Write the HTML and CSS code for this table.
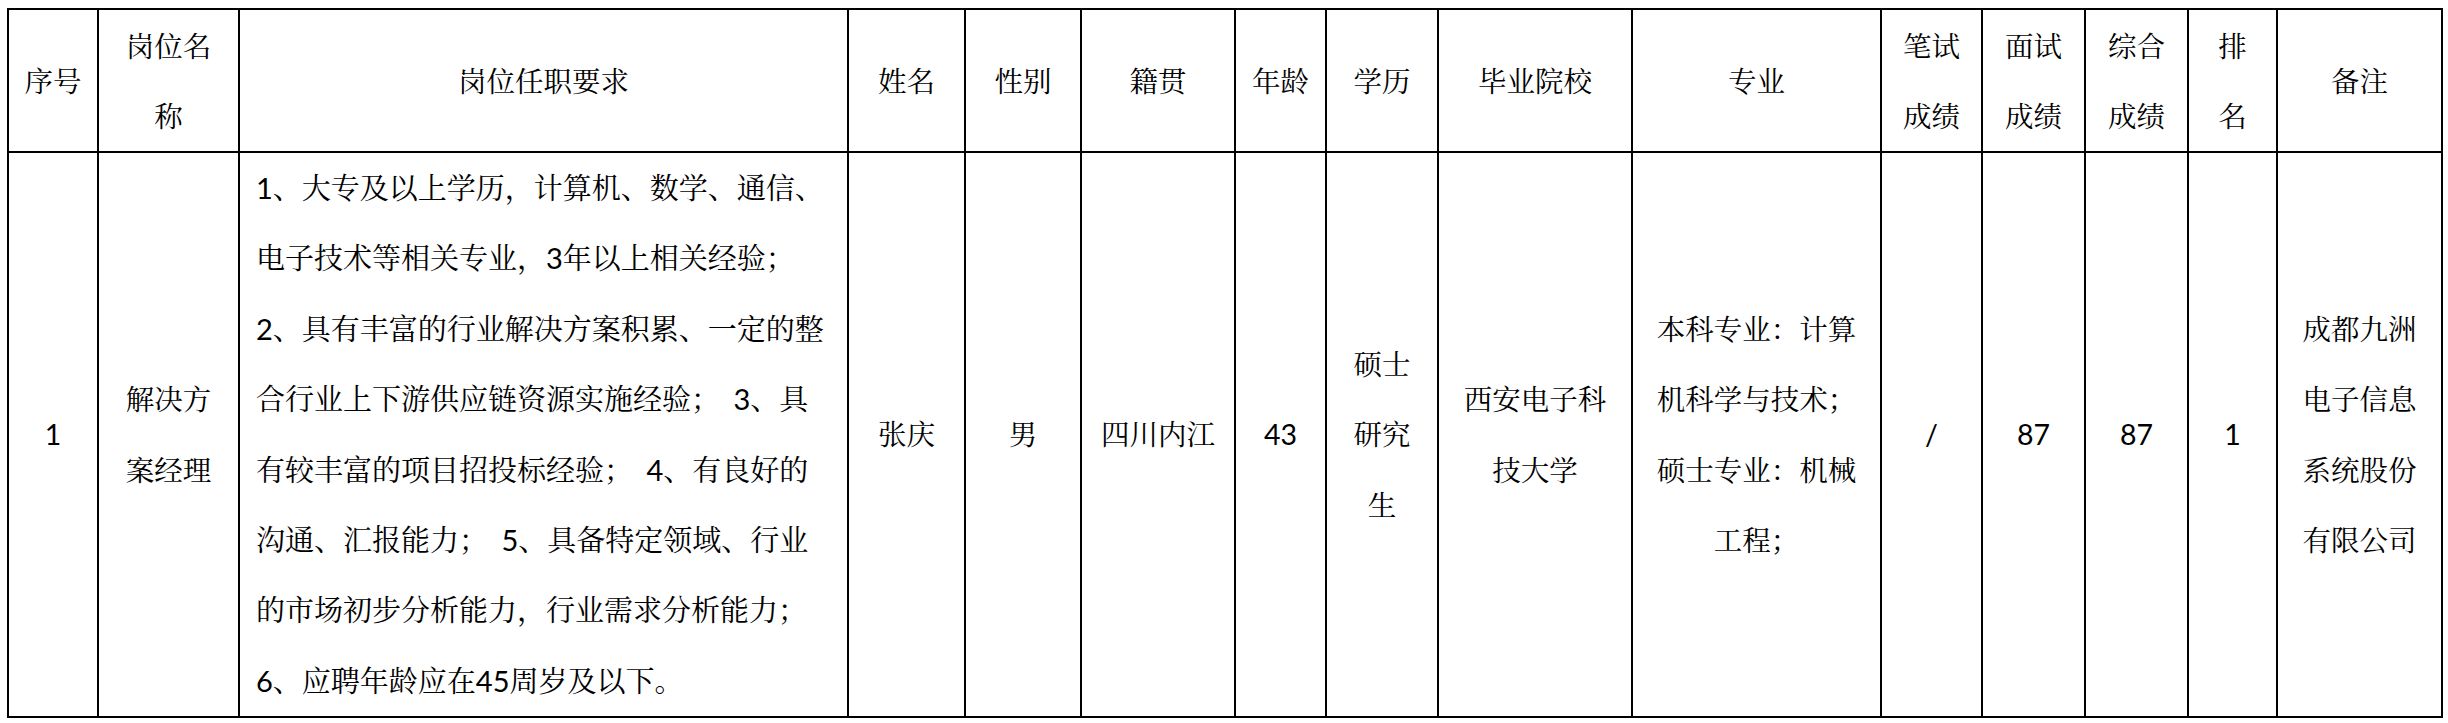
FILE: index.html
```html
<!DOCTYPE html>
<html lang="zh-CN">
<head>
<meta charset="utf-8">
<title>岗位成绩表</title>
<link rel="stylesheet" href="styles.css">
</head>
<body>
<div class="sheet">
  <div class="c hd">序号</div>
  <div class="c hd">岗位名<br>称</div>
  <div class="c hd">岗位任职要求</div>
  <div class="c hd">姓名</div>
  <div class="c hd">性别</div>
  <div class="c hd">籍贯</div>
  <div class="c hd">年龄</div>
  <div class="c hd">学历</div>
  <div class="c hd">毕业院校</div>
  <div class="c hd">专业</div>
  <div class="c hd">笔试<br>成绩</div>
  <div class="c hd">面试<br>成绩</div>
  <div class="c hd">综合<br>成绩</div>
  <div class="c hd">排<br>名</div>
  <div class="c hd">备注</div>

  <div class="c">1</div>
  <div class="c">解决方<br>案经理</div>
  <div class="c req">1、大专及以上学历，计算机、数学、通信、<br>电子技术等相关专业，3年以上相关经验；<br>2、具有丰富的行业解决方案积累、一定的整<br>合行业上下游供应链资源实施经验； 3、具<br>有较丰富的项目招投标经验； 4、有良好的<br>沟通、汇报能力； 5、具备特定领域、行业<br>的市场初步分析能力，行业需求分析能力；<br>6、应聘年龄应在45周岁及以下。</div>
  <div class="c">张庆</div>
  <div class="c">男</div>
  <div class="c">四川内江</div>
  <div class="c">43</div>
  <div class="c">硕士<br>研究<br>生</div>
  <div class="c">西安电子科<br>技大学</div>
  <div class="c">本科专业：计算<br>机科学与技术；<br>硕士专业：机械<br>工程；</div>
  <div class="c">/</div>
  <div class="c">87</div>
  <div class="c">87</div>
  <div class="c">1</div>
  <div class="c">成都九洲<br>电子信息<br>系统股份<br>有限公司</div>
</div>
</body>
</html>
```

FILE: styles.css
```css
html, body {
  margin: 0;
  padding: 0;
  background: #fff;
}

.sheet {
  display: grid;
  grid-template-columns: 88px 139px 607px 115px 114px 152px 89px 110px 192px 247px 99px 101px 101px 87px 163px;
  grid-template-rows: 141px 563px;
  gap: 2px;
  padding: 2px;
  background: #000;
  width: max-content;
  margin: 8px 0 0 7px;
}

.c {
  background: #fff;
  display: flex;
  align-items: center;
  justify-content: center;
  text-align: center;
  color: #000;
  font-family: Lato, "Noto Serif CJK SC", "Noto Sans CJK SC", serif;
  font-size: 28.5px;
  line-height: 70.4px;
  white-space: nowrap;
  overflow: hidden;
}

.hd {
  line-height: 70px;
}

.req {
  justify-content: flex-start;
  text-align: left;
  padding-left: 16px;
  font-size: 29px;
  word-spacing: 6px;
}
```
